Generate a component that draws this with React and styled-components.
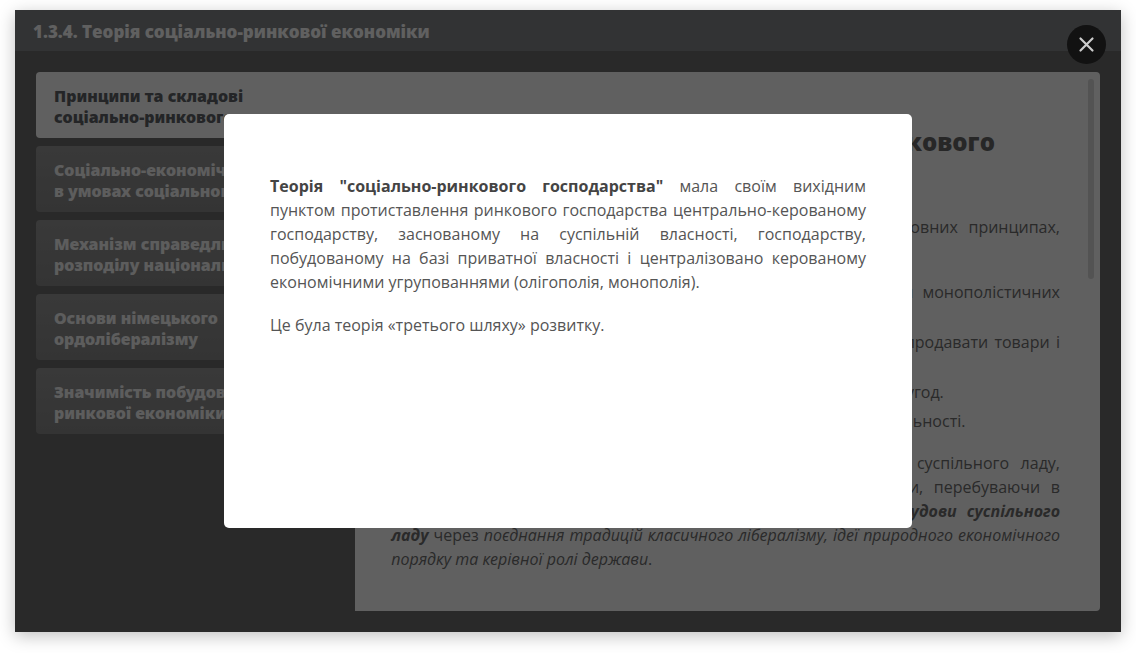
import React from "react";
import styled, { createGlobalStyle } from "styled-components";

const GlobalStyle = createGlobalStyle`
  * { box-sizing: border-box; }
  body {
    margin: 0;
    background: #fff;
    font-family: "Open Sans", "Noto Sans", sans-serif;
    font-size: 16px;
    line-height: 24px;
  }
`;

const Frame = styled.div`
  position: relative;
  display: flex;
  flex-direction: column;
  min-height: calc(100vh - 31px);
  margin: 10px 15px 21px;
  background: #6d6d6d;
  box-shadow: 0 4px 16px rgba(0, 0, 0, 0.25);
`;

const Header = styled.header`
  padding: 10px 18px 7px;
  background: #85888b;
`;

const Title = styled.h1`
  margin: 0;
  color: #fff;
  font-size: 17px;
  font-weight: 800;
  line-height: 24px;
`;

const Body = styled.main`
  display: flex;
  flex: 1;
  padding: 21px;
`;

const Tabs = styled.nav`
  display: flex;
  flex: 0 0 30%;
  flex-direction: column;
  gap: 8px;
`;

const Tab = styled.button`
  min-height: 66px;
  padding: 14px 18px 10px;
  border: 0;
  border-radius: ${(p) => (p.$active ? "4px 0 0 4px" : "4px")};
  background: ${(p) => (p.$active ? "#fff" : "linear-gradient(#989898, #8a8a8a)")};
  color: ${(p) => (p.$active ? "#606468" : "#f8f8f8")};
  font: 900 16px/21px "Noto Sans", sans-serif;
  text-align: left;
  white-space: pre-line;
`;

const Panel = styled.section`
  position: relative;
  flex: 1;
  min-width: 0;
  padding: 53px 40px 20px 36px;
  border-radius: 0 4px 4px 0;
  background: #fff;
  color: #707070;
`;

const PanelTitle = styled.h2`
  margin: 0 0 22px;
  color: #686868;
  font-size: 24px;
  font-weight: 800;
  line-height: 34px;
  text-align: center;
`;

const Paragraph = styled.p`
  margin: 0 0 19px;
  text-align: justify;
`;

const List = styled.ul`
  display: flex;
  flex-direction: column;
  gap: 8px;
  margin: 0 0 19px;
  padding-left: 32px;
  line-height: 21px;
  text-align: justify;
`;

const ScrollThumb = styled.div`
  position: absolute;
  top: 7px;
  right: 6px;
  width: 6px;
  height: 200px;
  border-radius: 3px;
  background: #dcdcdc;
`;

const Overlay = styled.div`
  position: absolute;
  inset: 0;
  display: flex;
  align-items: center;
  justify-content: center;
  background: rgba(0, 0, 0, 0.625);
`;

const Dialog = styled.div`
  width: 62.2%;
  min-height: 66.6%;
  padding: 60px 46px;
  border-radius: 5px;
  background: #fff;
  color: #555;

  b { color: #444; }
`;

const CloseButton = styled.button`
  position: absolute;
  top: 15px;
  right: 15px;
  display: flex;
  align-items: center;
  justify-content: center;
  width: 39px;
  height: 39px;
  padding: 0;
  border: 0;
  border-radius: 50%;
  background: #121212;
  color: #ccc;
`;

const tabs = [
  "Принципи та складові\nсоціально-ринкового",
  "Соціально-економічні\nв умовах соціального",
  "Механізм справедливого\nрозподілу національного",
  "Основи німецького\nордолібералізму",
  "Значимість побудови\nринкової економіки",
];

export default function App() {
  return (
    <>
      <GlobalStyle />
      <Frame>
        <Header>
          <Title>1.3.4. Теорія соціально-ринкової економіки</Title>
        </Header>
        <Body>
          <Tabs>
            {tabs.map((label, i) => (
              <Tab key={label} type="button" $active={i === 0}>{label}</Tab>
            ))}
          </Tabs>
          <Panel>
            <PanelTitle>Принципи й основи соціально-ринкового господарства</PanelTitle>
            <Paragraph>
              Теорія соціального ринкового господарства базується на основних принципах,
              серед яких:
            </Paragraph>
            <List>
              <li>Вільна конкуренція на ринку, рівний вхід та недопущення монополістичних об’єднань.</li>
              <li>Свобода цін і право кожного підприємця вільно купувати і продавати товари і послуги на ринку.</li>
              <li>Свобода підприємництва, договорів і укладання різних видів угод.</li>
              <li>Повна відповідальність за всі можливі результати власної діяльності.</li>
            </List>
            <Paragraph>
              Прихильники цієї теорії послідовно виступали за створення суспільного ладу,
              заснованого на свободі людини. Провідні німецькі економісти, перебуваючи в
              протистоянні до тодішньої влади, розробляли{" "}
              <b><i>концепцію побудови суспільного ладу</i></b>{" "}
              через <i>поєднання традицій класичного лібералізму, ідеї природного економічного
              порядку та керівної ролі держави</i>.
            </Paragraph>
            <ScrollThumb />
          </Panel>
        </Body>
        <Overlay>
          <Dialog role="dialog" aria-modal="true" aria-label="Теорія соціально-ринкового господарства">
            <Paragraph>
              <b>Теорія "соціально-ринкового господарства"</b> мала своїм вихідним пунктом
              протиставлення ринкового господарства центрально-керованому господарству,
              заснованому на суспільній власності, господарству, побудованому на базі
              приватної власності і централізовано керованому економічними угрупованнями
              (олігополія, монополія).
            </Paragraph>
            <Paragraph>Це була теорія «третього шляху» розвитку.</Paragraph>
          </Dialog>
          <CloseButton type="button" aria-label="Закрити">
            <svg width="17" height="17" viewBox="0 0 17 17" fill="none" stroke="currentColor" strokeWidth="2.2" strokeLinecap="round">
              <path d="M2.5 2.5L14.5 14.5M14.5 2.5L2.5 14.5" />
            </svg>
          </CloseButton>
        </Overlay>
      </Frame>
    </>
  );
}
